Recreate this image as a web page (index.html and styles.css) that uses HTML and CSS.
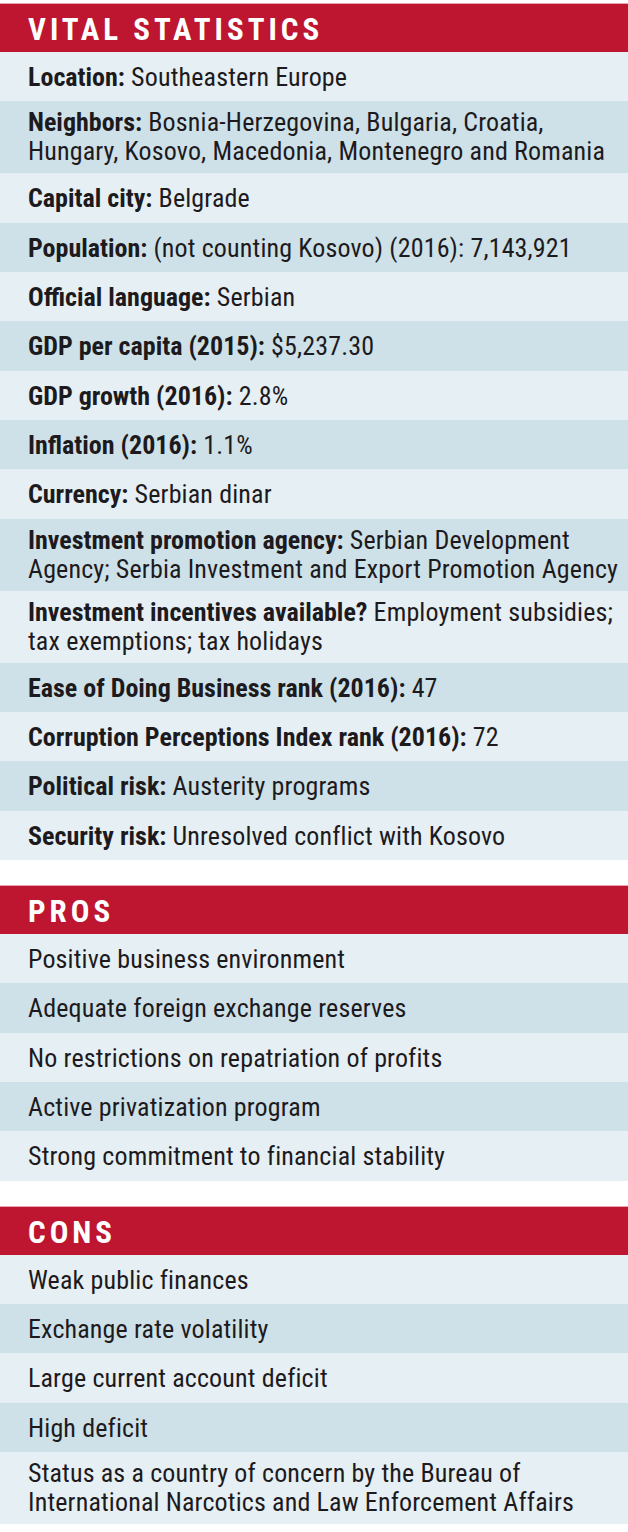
FILE: index.html
```html
<!DOCTYPE html>
<html lang="en">
<head>
<meta charset="utf-8">
<title>Serbia – Vital Statistics</title>
<link rel="stylesheet" href="styles.css">
</head>
<body>
<div class="page">
  <section class="box">
    <h2 class="box-head">VITAL STATISTICS</h2>
    <ul class="rows">
      <li class="row light"><b>Location:</b> Southeastern Europe</li>
      <li class="row dark two"><b>Neighbors:</b> Bosnia-Herzegovina, Bulgaria, Croatia,<br>Hungary, Kosovo, Macedonia, Montenegro and Romania</li>
      <li class="row light"><b>Capital city:</b> Belgrade</li>
      <li class="row dark"><b>Population:</b> (not counting Kosovo) (2016): 7,143,921</li>
      <li class="row light"><b>Official language:</b> Serbian</li>
      <li class="row dark"><b>GDP per capita (2015):</b> $5,237.30</li>
      <li class="row light"><b>GDP growth (2016):</b> 2.8%</li>
      <li class="row dark"><b>Inflation (2016):</b> 1.1%</li>
      <li class="row light"><b>Currency:</b> Serbian dinar</li>
      <li class="row dark two"><b>Investment promotion agency:</b> Serbian Development<br>Agency; Serbia Investment and Export Promotion Agency</li>
      <li class="row light two"><b>Investment incentives available?</b> Employment subsidies;<br>tax exemptions; tax holidays</li>
      <li class="row dark"><b>Ease of Doing Business rank (2016):</b> 47</li>
      <li class="row light"><b>Corruption Perceptions Index rank (2016):</b> 72</li>
      <li class="row dark"><b>Political risk:</b> Austerity programs</li>
      <li class="row light"><b>Security risk:</b> Unresolved conflict with Kosovo</li>
    </ul>
  </section>
  <section class="box">
    <h2 class="box-head">PROS</h2>
    <ul class="rows">
      <li class="row light">Positive business environment</li>
      <li class="row dark">Adequate foreign exchange reserves</li>
      <li class="row light">No restrictions on repatriation of profits</li>
      <li class="row dark">Active privatization program</li>
      <li class="row light">Strong commitment to financial stability</li>
    </ul>
  </section>
  <section class="box">
    <h2 class="box-head">CONS</h2>
    <ul class="rows">
      <li class="row light">Weak public finances</li>
      <li class="row dark">Exchange rate volatility</li>
      <li class="row light">Large current account deficit</li>
      <li class="row dark">High deficit</li>
      <li class="row light two">Status as a country of concern by the Bureau of<br>International Narcotics and Law Enforcement Affairs</li>
    </ul>
  </section>
</div>
</body>
</html>
```
FILE: styles.css
```css
html, body {
  margin: 0;
  padding: 0;
  background: #ffffff;
}
.page {
  width: 628px;
  padding-top: 3px;
  display: flex;
  flex-direction: column;
  gap: 25px;
  font-family: Roboto, "Open Sans", "Liberation Sans", sans-serif;
  font-stretch: 75%;
  color: #1d1a1d;
}
.box {
  display: flex;
  flex-direction: column;
}
.box-head {
  margin: 0;
  height: 45px;
  padding: 3px 28px 0;
  border-top: 1px solid #e7a6b2;
  background: #be1530;
  color: #ffffff;
  font-size: 31px;
  font-weight: bold;
  letter-spacing: 4px;
  line-height: 45px;
}
.rows {
  list-style: none;
  margin: 0;
  padding: 0;
}
.row {
  font-size: 26px;
  line-height: 29px;
  letter-spacing: 0.15px;
  padding: 11px 28px 9.33px;
  white-space: nowrap;
}
.row.two {
  padding: 7px 28px 7px;
}
.row b {
  font-weight: bold;
  letter-spacing: 0;
}
.light {
  background: #e6eff3;
}
.dark {
  background: #cee1e8;
}
```
